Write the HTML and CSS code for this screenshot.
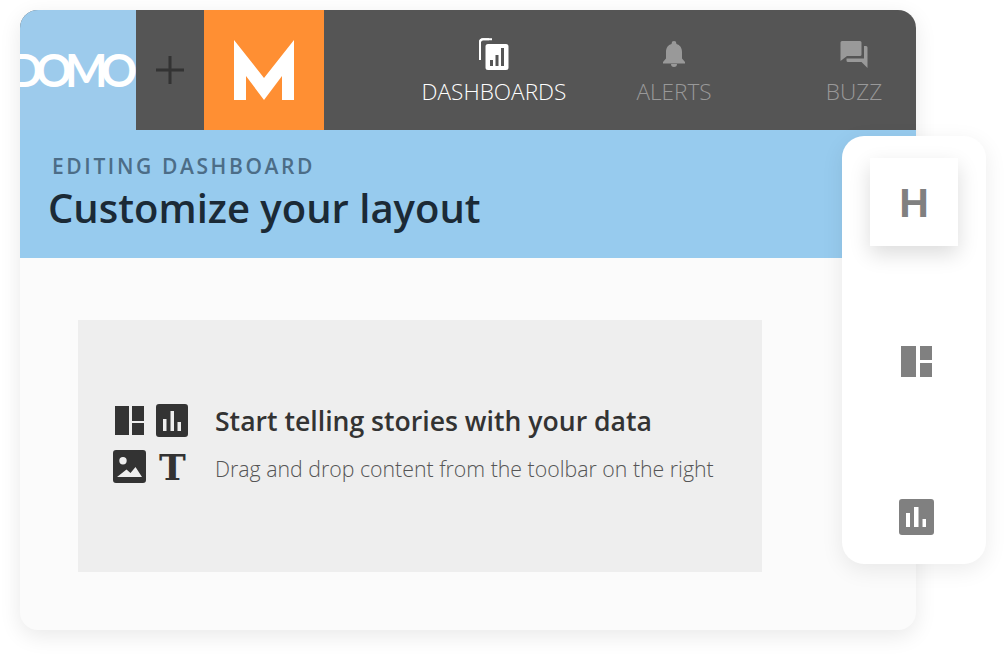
FILE: index.html
```html
<!DOCTYPE html>
<html lang="en">
<head>
<meta charset="utf-8">
<title>Customize your layout</title>
<link rel="stylesheet" href="styles.css">
</head>
<body>
<div class="stage">
  <main class="card">
    <header class="topbar">
      <div class="logo-domo"><span class="domo-text">DOMO</span></div>
      <div class="plus-cell">
        <svg class="plus" viewBox="0 0 28 28"><path d="M14 0v28M0 14h28" stroke="#333" stroke-width="3" fill="none"/></svg>
      </div>
      <div class="logo-m">
        <svg class="m-mark" viewBox="0 0 60 60" role="img" aria-label="M logo"><polygon points="0,0 30,38 60,0 60,60 48,60 48,36 30,60 12,36 12,60 0,60" fill="#fff"/></svg>
      </div>
      <nav class="nav">
        <div class="nav-item active">
          <svg class="nav-icon" width="30" height="32" viewBox="0 0 30 32">
            <path d="M10 1.200H4a3 3 0 0 0-3 3V22" fill="none" stroke="#fff" stroke-width="2"/>
            <path d="M1 4.200a3 3 0 0 1 3-3h9" fill="none" stroke="#fff" stroke-width="2"/>
            <path fill-rule="evenodd" fill="#fff" d="M9 6h18a2.500 2.500 0 0 1 2.500 2.500v21a2.500 2.500 0 0 1-2.500 2.500H9a2.500 2.500 0 0 1-2.500-2.500v-21A2.500 2.500 0 0 1 9 6zM11 22v6h3v-6zM16.500 17v11h3V17zM22 10v18h3V10z"/>
          </svg>
          <span class="nav-label">DASHBOARDS</span>
        </div>
        <div class="nav-item">
          <svg class="nav-icon" width="30" height="32" viewBox="0 0 30 32">
            <path fill="#999" d="M15 3a2.400 2.400 0 0 1 2.400 2.400v.7c3.700 1 5.600 4 5.600 7.900v6.500l3 3.500v1.500H4v-1.500l3-3.500V14c0-3.900 1.900-6.900 5.600-7.900v-.7A2.400 2.400 0 0 1 15 3zM12 26h6a3 3 0 0 1-6 0z"/>
          </svg>
          <span class="nav-label">ALERTS</span>
        </div>
        <div class="nav-item">
          <svg class="nav-icon" width="30" height="32" viewBox="0 0 30 32">
            <path fill="#999" d="M3 3h18a1.500 1.500 0 0 1 1.500 1.500v12a1.500 1.500 0 0 1-1.500 1.500H8l-6.500 5V4.500A1.500 1.500 0 0 1 3 3zM25 8h2a1.500 1.500 0 0 1 1.500 1.500V30L22.500 24H9a1.500 1.500 0 0 1-1.500-1.500V20.500H25z"/>
          </svg>
          <span class="nav-label">BUZZ</span>
        </div>
      </nav>
    </header>
    <section class="banner">
      <div class="eyebrow">EDITING DASHBOARD</div>
      <h1 class="title">Customize your layout</h1>
    </section>
    <section class="content">
      <div class="dropzone">
        <div class="icon-grid">
          <svg class="ic-layout" viewBox="0 0 29 29"><path fill="#333" d="M0 0h14v29H0zM17 0h12v15H17zM17 17h12v12H17z"/></svg>
          <svg class="ic-chart" viewBox="0 0 32 33"><path fill="#333" fill-rule="evenodd" d="M3 0h26a3 3 0 0 1 3 3v27a3 3 0 0 1-3 3H3a3 3 0 0 1-3-3V3a3 3 0 0 1 3-3zM7 15v12h3.500V15zM14.500 7v20H18V7zM21.500 18v9H25v-9z"/></svg>
          <svg class="ic-image" viewBox="0 0 33 33"><path fill="#333" fill-rule="evenodd" d="M3 0h27a3 3 0 0 1 3 3v27a3 3 0 0 1-3 3H3a3 3 0 0 1-3-3V3a3 3 0 0 1 3-3zM10 7a3.700 3.700 0 1 0 0 7.400A3.700 3.700 0 0 0 10 7zM4 27h25l-6.500-10-5 6-4-3.500z"/></svg>
          <span class="ic-text">T</span>
        </div>
        <div class="drop-copy">
          <div class="drop-title">Start telling stories with your data</div>
          <div class="drop-sub">Drag and drop content from the toolbar on the right</div>
        </div>
      </div>
    </section>
  </main>
  <aside class="toolbar">
    <div class="tool-h">H</div>
    <svg class="tool-layout" viewBox="0 0 31 31"><path fill="#808080" d="M0 0h15v31H0zM19 0h12v14H19zM19 17h12v14H19z"/></svg>
    <svg class="tool-chart" viewBox="0 0 35 36"><path fill="#808080" fill-rule="evenodd" d="M3 0h29a3 3 0 0 1 3 3v30a3 3 0 0 1-3 3H3a3 3 0 0 1-3-3V3a3 3 0 0 1 3-3zM7 14v14h4V14zM15 8v20h4.500V8zM23.500 20v8H27v-8z"/></svg>
  </aside>
</div>
</body>
</html>
```
FILE: styles.css
```css
* { box-sizing: border-box; }
html, body { margin: 0; background: #fff; }
body { font-family: "Open Sans", "Liberation Sans", sans-serif; overflow: hidden; }
.stage { position: relative; width: 1006px; height: 660px; padding: 10px 0 0 20px; }

.card {
  width: 896px;
  height: 620px;
  border-radius: 18px;
  overflow: hidden;
  background: #fbfbfb;
  box-shadow: 0 6px 22px rgba(0, 0, 0, 0.09);
  display: flex;
  flex-direction: column;
}

.topbar { height: 120px; display: flex; background: #555; flex: none; }
.logo-domo {
  width: 116px;
  background: #9dcbec;
  overflow: hidden;
  display: flex;
  align-items: center;
  justify-content: flex-end;
  flex: none;
}
.domo-text {
  font-family: "Lato", sans-serif;
  font-size: 45px;
  font-weight: 700;
  letter-spacing: -7px;
  color: #fff;
  line-height: 1;
  white-space: nowrap;
  flex: none;
  margin-right: 6px;
  padding-top: 1px;
}
.plus-cell { width: 68px; display: flex; align-items: center; justify-content: center; flex: none; }
.plus { width: 28px; height: 28px; }
.logo-m {
  width: 120px;
  background: #ff8f33;
  display: flex;
  align-items: center;
  justify-content: center;
  flex: none;
}
.m-mark { width: 60px; height: 60px; }

.nav { display: flex; padding-left: 80px; flex: none; }
.nav-item {
  width: 180px;
  display: flex;
  flex-direction: column;
  align-items: center;
  padding-top: 28px;
  color: #999;
}
.nav-item.active { color: #fff; }
.nav-icon { display: block; }
.nav-label { font-size: 22.600px; font-weight: 300; line-height: 30px; margin-top: 7px; }

.banner { height: 128px; background: #97cbee; flex: none; padding: 22px 0 0 29px; }
.eyebrow {
  font-size: 21px;
  font-weight: 600;
  letter-spacing: 2.620px;
  line-height: 28px;
  color: #4c6d87;
  padding-left: 3px;
}
.title {
  margin: 0 0 0 -1px;
  font-size: 40px;
  font-weight: 600;
  line-height: 56px;
  color: #1b2a36;
}

.content { flex: 1; padding: 62px 0 0 58px; }
.dropzone {
  width: 684px;
  height: 252px;
  background: #eee;
  display: flex;
  align-items: center;
  padding: 0 0 0 35px;
}
.icon-grid {
  width: 77px;
  height: 80px;
  position: relative;
  flex: none;
  margin-top: -1px;
}
.ic-layout { position: absolute; left: 2px; top: 0; width: 29px; height: 29px; }
.ic-chart { position: absolute; left: 43px; top: -2px; width: 32px; height: 33px; }
.ic-image { position: absolute; left: 0; top: 44px; width: 33px; height: 33px; }
.ic-text {
  position: absolute;
  left: 46px;
  top: 37px;
  font-family: "DejaVu Serif", "Liberation Serif", serif;
  font-weight: 700;
  font-size: 36px;
  line-height: 48px;
  color: #333;
}
.drop-copy { margin-left: 25px; margin-top: -6px; }
.drop-title { font-size: 26.600px; font-weight: 600; line-height: 36px; color: #333; }
.drop-sub { font-size: 21.300px; font-weight: 300; line-height: 30px; color: #555; margin-top: 15px; }

.toolbar {
  position: absolute;
  left: 842px;
  top: 136px;
  width: 144px;
  height: 428px;
  background: #fff;
  border-radius: 22px;
  box-shadow: 0 6px 22px rgba(0, 0, 0, 0.08);
  display: flex;
  flex-direction: column;
  align-items: center;
  padding-top: 22px;
}
.tool-h {
  width: 88px;
  height: 88px;
  background: #fff;
  box-shadow: 0 8px 20px rgba(0, 0, 0, 0.14);
  display: flex;
  align-items: center;
  justify-content: center;
  font-family: "Liberation Sans", sans-serif;
  font-weight: 700;
  font-size: 41px;
  color: #808080;
  padding-top: 2px;
}
.tool-layout { width: 31px; height: 31px; margin-top: 100px; margin-left: 5px; }
.tool-chart { width: 35px; height: 36px; margin-top: 122px; margin-left: 4px; }
```
